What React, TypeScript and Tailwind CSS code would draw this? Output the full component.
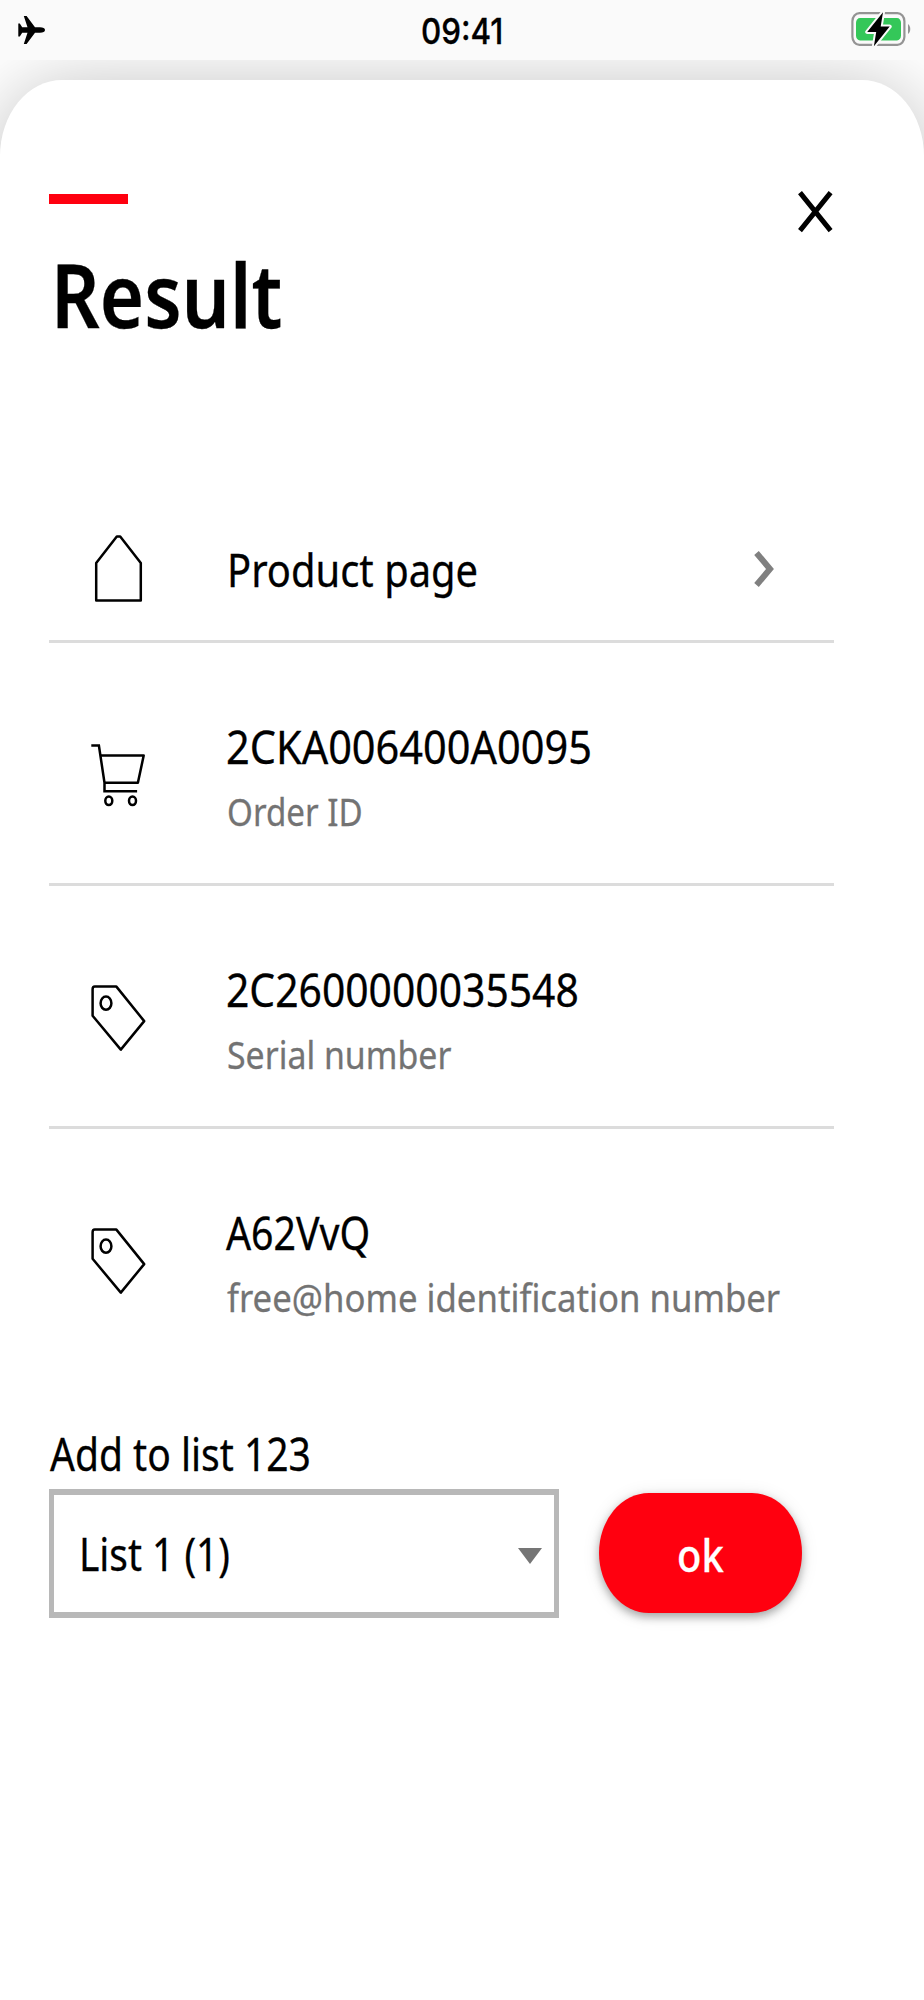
import React, { useLayoutEffect, useRef, useState } from 'react';
import clsx from 'clsx';

interface FitTextProps {
  width: number;
  className?: string;
  children: string;
}

// Condenses a single line of text horizontally to the given width
function FitText({ width, className, children }: FitTextProps) {
  const ref = useRef<HTMLSpanElement>(null);
  const [scale, setScale] = useState(1);

  useLayoutEffect(() => {
    if (ref.current) setScale(width / ref.current.offsetWidth);
  }, [width, children]);

  return (
    <span className={clsx('block whitespace-nowrap', className)} style={{ width }}>
      <span ref={ref} className="inline-block origin-left align-top" style={{ transform: `scaleX(${scale})` }}>
        {children}
      </span>
    </span>
  );
}

function AirplaneIcon() {
  return (
    <svg width="27" height="30" viewBox="0 0 27 30" fill="#000">
      <path d="M27 15c0 1.7-2 2.7-5 2.7h-5L8.6 29H5.8l3.7-11.3H4.2L1.8 21.5H.3V8.5h1.5l2.4 3.8h5.3L5.8 1h2.8L17 12.3h5c3 0 5 1 5 2.7z" />
    </svg>
  );
}

function BatteryIcon() {
  return (
    <svg width="60" height="36" viewBox="0 0 60 36" fill="none">
      <rect x="1.4" y="2.2" width="52" height="31.6" rx="7" ry="8" stroke="#949494" strokeWidth="2.2" />
      <rect x="5" y="7" width="45" height="22.5" rx="4" ry="5" fill="#34c759" />
      <path d="M57 13c3 2 3 8 0 10z" fill="#949494" />
      <path
        d="M32 1.2 16.2 21h9l-2.3 14.2L38.7 15.5h-9z"
        fill="#000"
        stroke="#fafafa"
        strokeWidth="4"
        strokeLinejoin="round"
        paintOrder="stroke"
      />
    </svg>
  );
}

function CloseIcon() {
  return (
    <svg width="36" height="42" viewBox="0 0 36 42" fill="none" stroke="#000" strokeWidth="5">
      <path d="M2 1.6 32.6 39.6M32.6 1.6 2 39.6" />
    </svg>
  );
}

function HomeIcon() {
  return (
    <svg width="54" height="68" viewBox="0 0 54 68" fill="none" stroke="#000" strokeWidth="2.5" strokeLinejoin="round">
      <path d="M5.2 65.4V28L25.8 1.6h3.4L49.8 28v37.4z" />
    </svg>
  );
}

function CartIcon() {
  return (
    <svg width="55" height="66" viewBox="0 0 55 66" fill="none" stroke="#000" strokeWidth="2.5">
      <path d="M.3 3.6h7.6l5.6 37.2v8.5h32.6" />
      <path d="M9.1 13.6h43.6l-5.8 27.2H13.5" strokeLinejoin="round" />
      <ellipse cx="17.8" cy="58.8" rx="3.5" ry="4.3" />
      <ellipse cx="41.5" cy="58.8" rx="3.5" ry="4.3" />
    </svg>
  );
}

function TagIcon() {
  return (
    <svg width="55" height="67" viewBox="0 0 55 67" fill="none" stroke="#000" strokeWidth="2.5" strokeLinejoin="round">
      <path d="M1.6 4.2Q1.6 1.6 3.8 1.6H25.4l27.8 34.5L29.8 64.6 1.6 30.8z" />
      <ellipse cx="15" cy="18.2" rx="5.4" ry="6.6" />
    </svg>
  );
}

interface DetailRowProps {
  icon: React.ReactNode;
  value: string;
  valueWidth: number;
  label: string;
  labelWidth: number;
  last?: boolean;
}

function DetailRow({ icon, value, valueWidth, label, labelWidth, last }: DetailRowProps) {
  return (
    <li className={clsx('flex h-[243px] pl-[42px] pt-[74px]', !last && 'border-b-[3px] border-[#dcdcdc]')}>
      <div className="w-[135px] shrink-0 pt-[25px]">{icon}</div>
      <div className="flex flex-col gap-[9px]">
        <FitText width={valueWidth} className="text-[45px] leading-[60px] text-black">
          {value}
        </FitText>
        <FitText width={labelWidth} className="pl-px text-[39px] leading-[50px] text-[#737373]">
          {label}
        </FitText>
      </div>
    </li>
  );
}

export default function App() {
  return (
    <div className="flex h-[2000px] w-[924px] flex-col overflow-hidden bg-white font-['Noto_Sans',sans-serif] text-black [-webkit-text-stroke:0.3px]">
      {/* Status bar */}
      <div className="relative z-10 flex h-[60px] shrink-0 items-start justify-between bg-[#fafafa] pl-[18px] pr-[13px]">
        <div className="w-[54px] pt-[15px]">
          <AirplaneIcon />
        </div>
        <FitText width={82} className="pt-[9px] font-['Inter',sans-serif] text-[36px] font-medium leading-[44px]">
          09:41
        </FitText>
        <div className="pt-[11px]">
          <BatteryIcon />
        </div>
      </div>

      {/* Result sheet */}
      <main className="mt-[20px] grow rounded-t-[62px_76px] bg-white pl-[49px] pt-[111px] shadow-[0_8px_80px_rgba(0,0,0,0.27)]">
        <header className="flex h-[306px] w-[785px] items-start justify-between">
          <div className="pt-[3px]">
            <div className="h-[10px] w-[79px] bg-[#ff000f]" />
            <h1 className="mt-[40px] pl-[2px]">
              <FitText width={231} className="text-[89px] font-semibold leading-[100px]">
                Result
              </FitText>
            </h1>
          </div>
          <button aria-label="Close">
            <CloseIcon />
          </button>
        </header>

        <ul className="w-[785px]">
          <li className="flex h-[146px] items-center border-b-[3px] border-[#dcdcdc] pl-[42px] pr-[58px]">
            <div className="w-[136px] shrink-0">
              <HomeIcon />
            </div>
            <FitText width={251} className="pt-[2px] text-[45px] leading-[60px]">
              Product page
            </FitText>
            <svg className="ml-auto" width="22" height="38" viewBox="0 0 22 38" fill="none" stroke="#808080" strokeWidth="6">
              <path d="M2.5 3 16 19 2.5 35" />
            </svg>
          </li>
          <DetailRow icon={<CartIcon />} value="2CKA006400A0095" valueWidth={366} label="Order ID" labelWidth={136} />
          <DetailRow
            icon={<TagIcon />}
            value="2C2600000035548"
            valueWidth={353}
            label="Serial number"
            labelWidth={224}
          />
          <DetailRow
            icon={<TagIcon />}
            value="A62VvQ"
            valueWidth={144}
            label="free@home identification number"
            labelWidth={553}
            last
          />
        </ul>

        {/* Add to list */}
        <section className="mt-[52px]">
          <FitText width={261} className="pl-px text-[45px] leading-[60px]">
            Add to list 123
          </FitText>
          <div className="mt-[5px] flex items-start gap-[40px]">
            <div className="flex h-[129px] w-[510px] items-center justify-between border-x-[5px] border-y-[6px] border-[#b8b8b8] pl-[25px] pr-[12px]">
              <FitText width={151} className="text-[45px] leading-[60px]">
                List 1 (1)
              </FitText>
              <svg className="mt-[4px]" width="24" height="16" viewBox="0 0 24 16" fill="#757575">
                <path d="M0 0h24L12 16z" />
              </svg>
            </div>
            <button className="mt-[4px] flex h-[120px] w-[203px] items-center justify-center rounded-[50px_/_60px] bg-[#ff000f] text-white shadow-[0_4px_8px_rgba(0,0,0,0.3),0_2px_18px_rgba(0,0,0,0.1)]">
              <FitText width={47} className="pt-[4px] text-[45px] font-medium leading-[60px]">
                ok
              </FitText>
            </button>
          </div>
        </section>
      </main>
    </div>
  );
}
